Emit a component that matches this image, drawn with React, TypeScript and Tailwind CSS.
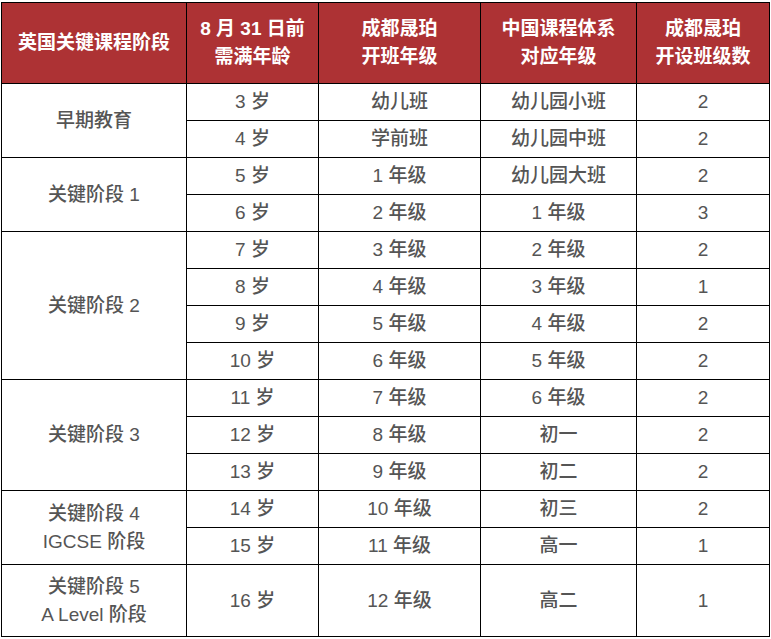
const font = { fontFamily: '"Liberation Sans", "Noto Sans CJK SC", sans-serif' };

type Row = { age: string; grade: string; cn: string; n: string };

const groups: { stage: string[]; rows: Row[]; tall?: boolean }[] = [
  {
    stage: ['早期教育'],
    rows: [
      { age: '3 岁', grade: '幼儿班', cn: '幼儿园小班', n: '2' },
      { age: '4 岁', grade: '学前班', cn: '幼儿园中班', n: '2' },
    ],
  },
  {
    stage: ['关键阶段 1'],
    rows: [
      { age: '5 岁', grade: '1 年级', cn: '幼儿园大班', n: '2' },
      { age: '6 岁', grade: '2 年级', cn: '1 年级', n: '3' },
    ],
  },
  {
    stage: ['关键阶段 2'],
    rows: [
      { age: '7 岁', grade: '3 年级', cn: '2 年级', n: '2' },
      { age: '8 岁', grade: '4 年级', cn: '3 年级', n: '1' },
      { age: '9 岁', grade: '5 年级', cn: '4 年级', n: '2' },
      { age: '10 岁', grade: '6 年级', cn: '5 年级', n: '2' },
    ],
  },
  {
    stage: ['关键阶段 3'],
    rows: [
      { age: '11 岁', grade: '7 年级', cn: '6 年级', n: '2' },
      { age: '12 岁', grade: '8 年级', cn: '初一', n: '2' },
      { age: '13 岁', grade: '9 年级', cn: '初二', n: '2' },
    ],
  },
  {
    stage: ['关键阶段 4', 'IGCSE 阶段'],
    rows: [
      { age: '14 岁', grade: '10 年级', cn: '初三', n: '2' },
      { age: '15 岁', grade: '11 年级', cn: '高一', n: '1' },
    ],
  },
  {
    stage: ['关键阶段 5', 'A Level 阶段'],
    tall: true,
    rows: [{ age: '16 岁', grade: '12 年级', cn: '高二', n: '1' }],
  },
];

const headers = [
  ['英国关键课程阶段'],
  ['8 月 31 日前', '需满年龄'],
  ['成都晟珀', '开班年级'],
  ['中国课程体系', '对应年级'],
  ['成都晟珀', '开设班级数'],
];

const cell = 'border border-black text-center align-middle p-0';

export default function App() {
  return (
    <div className="bg-white w-[771px] h-[639px] pt-[2px] pl-[1px]" style={font}>
      <table className="border-collapse table-fixed w-[768px] text-[19px] leading-[28px] text-[#555555] font-medium">
        <colgroup>
          <col className="w-[185px]" />
          <col className="w-[132px]" />
          <col className="w-[162px]" />
          <col className="w-[156px]" />
          <col className="w-[133px]" />
        </colgroup>
        <thead>
          <tr className="h-[81px] bg-[#ad3234]">
            {headers.map((h, i) => (
              <th key={i} className={`${cell} text-white font-bold`}>
                {h.map((line) => (
                  <div key={line}>{line}</div>
                ))}
              </th>
            ))}
          </tr>
        </thead>
        <tbody>
          {groups.map((g) =>
            g.rows.map((r, i) => (
              <tr key={r.age} className={g.tall ? 'h-[72px]' : 'h-[37px]'}>
                {i === 0 && (
                  <td rowSpan={g.rows.length} className={cell}>
                    {g.stage.map((line) => (
                      <div key={line}>{line}</div>
                    ))}
                  </td>
                )}
                <td className={cell}>{r.age}</td>
                <td className={cell}>{r.grade}</td>
                <td className={cell}>{r.cn}</td>
                <td className={cell}>{r.n}</td>
              </tr>
            ))
          )}
        </tbody>
      </table>
    </div>
  );
}
